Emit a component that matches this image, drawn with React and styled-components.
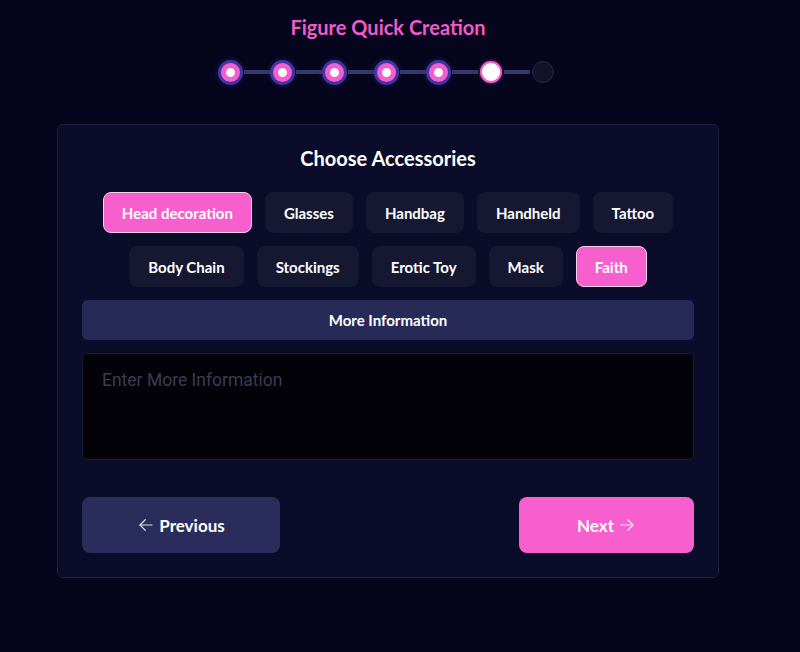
import React from 'react'
import styled, { createGlobalStyle } from 'styled-components'

const GlobalStyle = createGlobalStyle`
  html, body {
    margin: 0;
    padding: 0;
    background: #05061d;
  }
  body {
    font-family: 'Lato', 'Noto Sans', sans-serif;
    color: #fff;
  }
`

const Page = styled.div`
  width: 776px;
  height: 652px;
  display: flex;
  flex-direction: column;
  align-items: center;
  padding-top: 14px;
  box-sizing: border-box;
`

const Title = styled.h1`
  margin: 0;
  font-size: 20px;
  line-height: 26px;
  font-weight: 700;
  color: #f25ac8;
`

const Stepper = styled.div`
  display: flex;
  align-items: center;
  margin-top: 19px;
  margin-left: -3px;
`

const Connector = styled.div`
  width: 26px;
  height: 4px;
  background: #36376a;
`

const Dot = styled.div`
  width: 26px;
  height: 26px;
  display: flex;
  align-items: center;
  justify-content: center;
  flex-shrink: 0;

  span {
    display: block;
    box-sizing: border-box;
    border-radius: 50%;
  }

  ${({ $state }) =>
    $state === 'done'
      ? `
    span {
      width: 19px;
      height: 19px;
      background: #fff;
      border: 5px solid #f45fcf;
      box-shadow: 0 0 0 3px rgba(84, 64, 190, 0.75), 0 0 4px 4px rgba(70, 50, 170, 0.35);
    }
  `
      : $state === 'current'
      ? `
    span {
      width: 22px;
      height: 22px;
      background: #fff;
      border: 2px solid #f45fcf;
      box-shadow: 0 0 3px rgba(244, 95, 207, 0.6);
    }
  `
      : `
    span {
      width: 22px;
      height: 22px;
      background: #13142c;
      border: 1px solid #24254a;
    }
  `}
`

const Card = styled.div`
  margin-top: 39px;
  width: 662px;
  height: 454px;
  box-sizing: border-box;
  background: #0a0c29;
  border: 1px solid #1d1f42;
  border-radius: 6px;
  padding: 21px 24px 24px;
  display: flex;
  flex-direction: column;
`

const CardTitle = styled.h2`
  margin: 0;
  text-align: center;
  font-size: 20px;
  line-height: 24px;
  font-weight: 700;
  color: #fff;
`

const ChipGrid = styled.div`
  margin-top: 22px;
  display: flex;
  flex-wrap: wrap;
  justify-content: center;
  gap: 13px;
`

const Chip = styled.button`
  height: 41px;
  padding: 0 18px;
  box-sizing: border-box;
  border-radius: 8px;
  font-family: 'Lato', sans-serif;
  font-size: 15px;
  font-weight: 700;
  color: #fff;
  cursor: pointer;
  background: ${({ $active }) => ($active ? '#f75fcf' : '#161731')};
  border: ${({ $active }) => ($active ? '1.5px solid #f3d3ea' : '1.5px solid transparent')};
`

const InfoBar = styled.div`
  margin-top: 13px;
  height: 40px;
  border-radius: 6px;
  background: #272a56;
  display: flex;
  align-items: center;
  justify-content: center;
  font-size: 15px;
  font-weight: 700;
`

const TextArea = styled.textarea`
  margin-top: 13px;
  height: 107px;
  box-sizing: border-box;
  resize: none;
  background: #020208;
  border: 1px solid #1a1b36;
  border-radius: 4px;
  padding: 16px 19px;
  font-family: 'Roboto', sans-serif;
  font-size: 17.5px;
  color: #fff;
  outline: none;

  &::placeholder {
    color: #3a3b50;
  }
`

const Actions = styled.div`
  margin-top: 37px;
  display: flex;
  justify-content: space-between;
`

const NavButton = styled.button`
  width: ${({ $w }) => $w}px;
  height: 56px;
  border: none;
  border-radius: 8px;
  background: ${({ $primary }) => ($primary ? '#f75fcf' : '#2a2d5b')};
  color: #fff;
  font-family: 'Lato', sans-serif;
  font-size: 17px;
  font-weight: 700;
  display: flex;
  align-items: center;
  justify-content: center;
  gap: 4px;
  cursor: pointer;

  svg {
    opacity: 0.85;
  }
`

const Arrow = ({ dir }) => (
  <svg width="18" height="18" viewBox="0 0 24 24" fill="none" stroke="#fff" strokeWidth="1.6" strokeLinecap="round" strokeLinejoin="round">
    {dir === 'left' ? (
      <>
        <path d="M20 12H4" />
        <path d="M11 5l-7 7 7 7" />
      </>
    ) : (
      <>
        <path d="M4 12h16" />
        <path d="M13 5l7 7-7 7" />
      </>
    )}
  </svg>
)

const steps = ['done', 'done', 'done', 'done', 'done', 'current', 'todo']

const accessories = [
  { name: 'Head decoration', active: true },
  { name: 'Glasses' },
  { name: 'Handbag' },
  { name: 'Handheld' },
  { name: 'Tattoo' },
  { name: 'Body Chain' },
  { name: 'Stockings' },
  { name: 'Erotic Toy' },
  { name: 'Mask' },
  { name: 'Faith', active: true },
]

export default function App() {
  return (
    <>
      <GlobalStyle />
      <Page>
        <Title>Figure Quick Creation</Title>
        <Stepper>
          {steps.map((s, i) => (
            <React.Fragment key={i}>
              {i > 0 && <Connector />}
              <Dot $state={s}>
                <span />
              </Dot>
            </React.Fragment>
          ))}
        </Stepper>
        <Card>
          <CardTitle>Choose Accessories</CardTitle>
          <ChipGrid>
            {accessories.map(a => (
              <Chip key={a.name} $active={a.active}>
                {a.name}
              </Chip>
            ))}
          </ChipGrid>
          <InfoBar>More Information</InfoBar>
          <TextArea placeholder="Enter More Information" />
          <Actions>
            <NavButton $w={198}>
              <Arrow dir="left" />
              Previous
            </NavButton>
            <NavButton $w={175} $primary>
              Next
              <Arrow dir="right" />
            </NavButton>
          </Actions>
        </Card>
      </Page>
    </>
  )
}
